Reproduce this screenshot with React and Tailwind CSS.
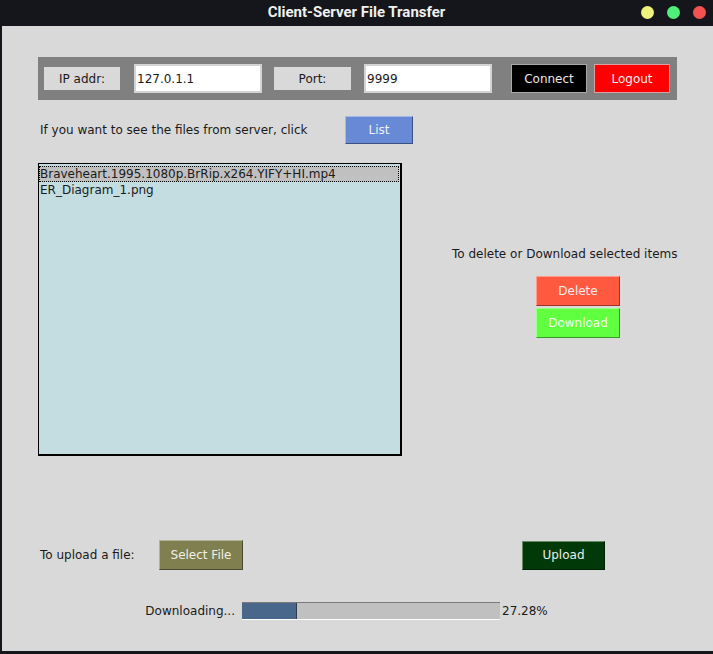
import React from "react";

const FILES = [
  "Braveheart.1995.1080p.BrRip.x264.YIFY+HI.mp4",
  "ER_Diagram_1.png",
];

function TkButton({ label, className }) {
  return (
    <div
      className={`flex items-center justify-center border border-t-white/40 border-l-white/40 border-r-black/40 border-b-black/40 ${className}`}
    >
      {label}
    </div>
  );
}

export default function App() {
  return (
    <div className="w-[713px] h-[654px] bg-[#15161b] flex flex-col font-['DejaVu_Sans',sans-serif] text-[12px] text-[#1a1a1a] leading-[16px]">
      {/* title bar */}
      <div className="h-[26px] relative flex items-center justify-center shrink-0">
        <span className="font-['Roboto',sans-serif] font-bold text-[15px] text-[#f0f0f0] -mt-[2px]">
          Client-Server File Transfer
        </span>
        <div className="absolute right-[7px] top-[6px] flex gap-[13px]">
          <span className="w-[13px] h-[13px] rounded-full bg-[#eef27c]" />
          <span className="w-[13px] h-[13px] rounded-full bg-[#4ef07a]" />
          <span className="w-[13px] h-[13px] rounded-full bg-[#f45252]" />
        </div>
      </div>

      {/* window body */}
      <div className="flex-1 ml-[2px] mb-[3px] bg-[#d9d9d9] flex flex-col">
        {/* connection panel */}
        <div className="mt-[31px] ml-[36px] w-[639px] h-[43px] bg-[#808080] flex items-center pl-[6px]">
          <div className="w-[76px] h-[23px] bg-[#d9d9d9] flex items-center justify-center">IP addr:</div>
          <div className="ml-[14px] w-[128px] h-[29px] bg-white border-2 border-[#d4d4d4] flex items-center pl-[1px]">
            127.0.1.1
          </div>
          <div className="ml-[12px] w-[77px] h-[23px] bg-[#d9d9d9] flex items-center justify-center">Port:</div>
          <div className="ml-[13px] w-[128px] h-[29px] bg-white border-2 border-[#d4d4d4] flex items-center pl-[1px]">
            9999
          </div>
          <div className="ml-[19px] w-[76px] h-[29px] bg-black border border-[#a8a8a8] text-[#e8e8e8] flex items-center justify-center">
            Connect
          </div>
          <div className="ml-[7px] w-[76px] h-[29px] bg-[#ff0000] border border-[#d8a0a0] text-[#f4f4f4] flex items-center justify-center">
            Logout
          </div>
        </div>

        {/* list row */}
        <div className="mt-[16px] pl-[38px] flex items-center">
          <span className="w-[305px]">If you want to see the files from server, click</span>
          <TkButton label="List" className="w-[68px] h-[28px] bg-[#6789d6] text-[#f0f0f0]" />
        </div>

        {/* listbox + actions */}
        <div className="mt-[19px] flex">
          <div className="ml-[36px] w-[364px] h-[293px] bg-[#c3dde1] border-t border-l border-r-2 border-b-2 border-black pt-[2px]">
            {FILES.map((f, i) => (
              <div
                key={f}
                className={`h-[16px] mr-[1px] flex items-center whitespace-nowrap ${
                  i === 0 ? "bg-[#c0c0c0] border border-dotted border-black" : "border border-transparent"
                }`}
              >
                {f}
              </div>
            ))}
          </div>
          <div className="ml-[50px] pt-[83px] flex flex-col">
            <span>To delete or Download selected items</span>
            <TkButton label="Delete" className="mt-[14px] ml-[84px] w-[84px] h-[30px] bg-[#ff5a40] text-[#f8ecec]" />
            <TkButton label="Download" className="mt-[2px] ml-[84px] w-[84px] h-[30px] bg-[#60ff40] text-[#f4fff0]" />
          </div>
        </div>

        {/* upload row */}
        <div className="mt-[84px] pl-[38px] flex items-center">
          <span className="w-[119px]">To upload a file:</span>
          <TkButton label="Select File" className="w-[84px] h-[30px] bg-[#7f7f50] text-[#f0f0e8]" />
          <TkButton label="Upload" className="ml-[279px] w-[83px] h-[29px] bg-[#013a08] text-[#e8f0e8]" />
        </div>

        {/* progress row */}
        <div className="mt-[32px] pl-[38px] flex items-center">
          <span className="w-[196px] text-right pr-[1px]">Downloading...</span>
          <div className="ml-[6px] w-[258px] h-[18px] bg-[#c0c0c0] border-t border-t-[#7a7a7a] border-b border-b-white flex">
            <div className="w-[55px] h-full bg-[#48678a] border-r border-r-[#2a3a4a]" />
          </div>
          <span className="ml-[2px]">27.28%</span>
        </div>
      </div>
    </div>
  );
}
